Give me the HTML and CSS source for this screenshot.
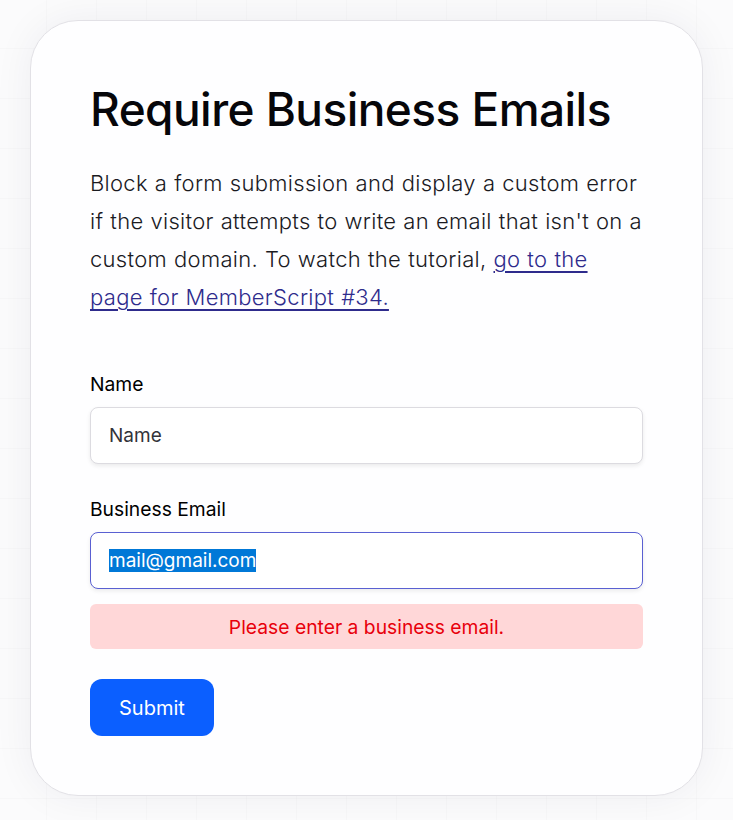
FILE: index.html
```html
<!DOCTYPE html>
<html lang="en">
<head>
  <meta charset="UTF-8">
  <meta name="viewport" content="width=device-width, initial-scale=1.0">
  <title>Require Business Emails</title>
  <link rel="stylesheet" href="styles.css">
</head>
<body>
  <div class="card">
    <h1>Require Business Emails</h1>
    <p class="intro">Block a form submission and display a custom error if the visitor attempts to write an email that isn't on a custom domain. To watch the tutorial, <a href="#">go to the page for MemberScript #34.</a></p>

    <form class="form" onsubmit="return false;">
      <label for="name">Name</label>
      <input type="text" id="name" placeholder="Name">

      <label for="email" class="label-gap">Business Email</label>
      <input type="email" id="email" class="is-focused" value="mail@gmail.com">

      <div class="error">Please enter a business email.</div>

      <div>
        <button type="submit" class="submit-button">Submit</button>
      </div>
    </form>
  </div>

  <script>
    // show the email as selected, like the visitor just typed it
    var email = document.getElementById('email');
    email.focus();
    email.select();
  </script>
</body>
</html>
```

FILE: styles.css
```css
body {
  font-family: 'Inter', 'Liberation Sans', sans-serif;
  margin: 0;
  padding: 20px 30px 24px;
  background-color: #fbfbfc;
  background-image:
    linear-gradient(rgba(0, 0, 0, 0.014) 1px, transparent 1px),
    linear-gradient(90deg, rgba(0, 0, 0, 0.014) 1px, transparent 1px);
  background-size: 50px 50px;
  background-position: -4px -2px;
  color: #111;
}

.card {
  background: #fefeff;
  border: 1px solid #e2e1e6;
  border-radius: 48px;
  padding: 59px 59px 59px;
  box-shadow: 0 0 40px rgba(30, 20, 60, 0.06);
}

h1 {
  font-size: 46px;
  font-weight: 500;
  line-height: 58px;
  letter-spacing: -0.55px;
  margin: 0;
  color: #06060a;
}

.intro {
  font-size: 22px;
  font-weight: 300;
  line-height: 38px;
  letter-spacing: 0.3px;
  word-spacing: 0.5px;
  color: #1a1a1f;
  margin: 26px 0 0;
}

.intro a {
  color: #2e2b8c;
  text-decoration: underline;
  text-decoration-thickness: 2px;
  text-underline-offset: 4px;
}

.form {
  display: flex;
  flex-direction: column;
  margin-top: 56px;
}

label {
  font-size: 19.3px;
  font-weight: 400;
  line-height: 25px;
  color: #000;
  margin-bottom: 10px;
}

.label-gap {
  margin-top: 33px;
}

input {
  font-family: 'Inter', 'Liberation Sans', sans-serif;
  font-size: 19px;
  font-weight: 400;
  height: 57px;
  box-sizing: border-box;
  padding: 0 18px;
  border: 1px solid #dcdbe0;
  border-radius: 8px;
  background: #fff;
  color: #2a2a30;
  box-shadow: 0 2px 4px rgba(0, 0, 0, 0.08);
  outline: none;
}

input::placeholder {
  color: #33333a;
}

input.is-focused {
  border-color: #5a60d2;
}

input::selection {
  background: #0078d7;
  color: #fff;
}

.error {
  margin-top: 15px;
  height: 45px;
  display: flex;
  align-items: center;
  justify-content: center;
  background: #ffd7d8;
  border-radius: 6px;
  color: #e8000b;
  font-size: 19.3px;
}

.submit-button {
  margin-top: 30px;
  font-family: 'Inter', 'Liberation Sans', sans-serif;
  font-size: 20px;
  height: 57px;
  padding: 0 29px;
  background-color: #0b5fff;
  color: #fff;
  border: none;
  border-radius: 12px;
  cursor: pointer;
}
```
